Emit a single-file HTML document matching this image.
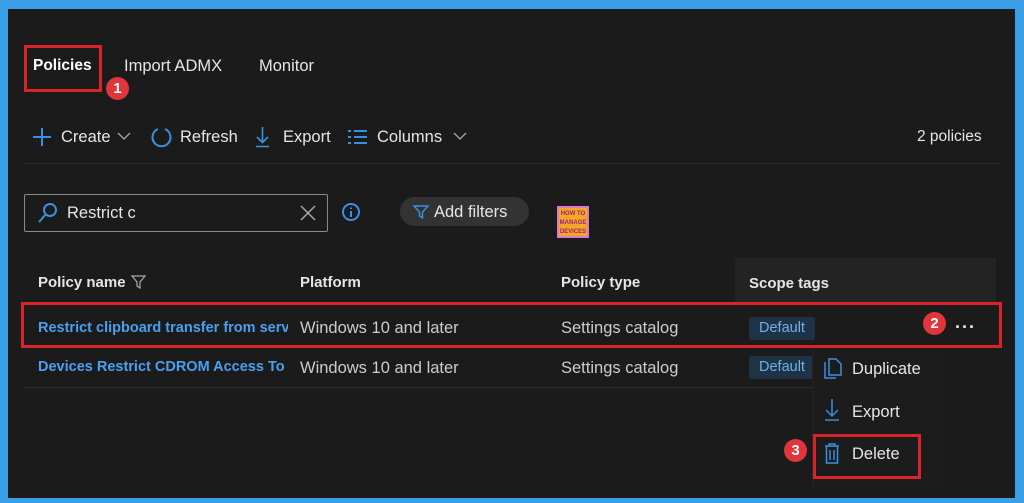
<!DOCTYPE html>
<html><head><style>
*{margin:0;padding:0;box-sizing:border-box}
body{width:1024px;height:503px;background:#3a9fe6;position:relative;overflow:hidden;font-family:"Liberation Sans",sans-serif;color:#e6e6e6;font-size:16.5px}
.main{position:absolute;left:8px;top:9px;width:1007px;height:489px;background:#1b1b1b}
.a{position:absolute;white-space:nowrap}
.b{font-weight:bold}
.red{position:absolute;border:3px solid #d8232a}
.badge{position:absolute;width:23px;height:23px;border-radius:50%;background:#e0353a;color:#fff;font-weight:bold;font-size:15px;text-align:center;line-height:23px}
.link{color:#4aa0f0;font-weight:bold}
.def{position:absolute;background:#1f3346;color:#6fb0ea;font-size:14.5px;border-radius:3px;width:66px;height:23px;line-height:23px;text-align:center}
svg{position:absolute}
</style></head><body>
<div class="main"></div>
<div class="a b" style="left:33px;top:57px;color:#fff;font-size:15.5px">Policies</div>
<div class="a" style="left:124px;top:57px">Import ADMX</div>
<div class="a" style="left:259px;top:57px">Monitor</div>
<div class="red" style="left:24px;top:45px;width:78px;height:47px"></div>
<div class="badge" style="left:106px;top:77px">1</div>

<svg style="left:32px;top:127px" width="20" height="20"><path d="M10 1v18M1 10h18" stroke="#3b8fe0" stroke-width="2"/></svg>
<div class="a" style="left:61px;top:128px">Create</div>
<svg style="left:117px;top:132px" width="14" height="9"><path d="M1 1l6 6 6-6" stroke="#aaa" fill="none" stroke-width="1.3"/></svg>
<svg style="left:150px;top:126px" width="22" height="22"><path d="M8 3A9 9 0 1 0 15 3" stroke="#3b8fe0" fill="none" stroke-width="2"/></svg>
<div class="a" style="left:180px;top:128px">Refresh</div>
<svg style="left:255px;top:126px" width="15" height="22"><path d="M7.5 1v15M2 11l5.5 5.5L13 11M1 20.5h13" stroke="#3b8fe0" fill="none" stroke-width="1.6"/></svg>
<div class="a" style="left:283px;top:128px">Export</div>
<svg style="left:347px;top:129px" width="21" height="16"><path d="M1 2h3M1 8h3M1 14h3M7 2h13M7 8h13M7 14h13" stroke="#3b8fe0" stroke-width="2"/></svg>
<div class="a" style="left:377px;top:128px">Columns</div>
<svg style="left:453px;top:132px" width="14" height="9"><path d="M1 1l6 6 6-6" stroke="#aaa" fill="none" stroke-width="1.3"/></svg>
<div class="a" style="left:917px;top:128px;font-size:15.5px">2 policies</div>
<div class="a" style="left:24px;top:163px;width:976px;height:1px;background:#2e2e2e"></div>

<div class="a" style="left:24px;top:194px;width:304px;height:38px;border:1px solid #8a8a8a;border-radius:2px"></div>
<svg style="left:37px;top:202px" width="22" height="22"><circle cx="13" cy="8" r="6" stroke="#3b8fe0" fill="none" stroke-width="2"/><path d="M9 12L2 20" stroke="#3b8fe0" stroke-width="2"/></svg>
<div class="a" style="left:67px;top:204px">Restrict c</div>
<svg style="left:300px;top:205px" width="16" height="16"><path d="M1 1l14 14M15 1L1 15" stroke="#aaa" stroke-width="1.5"/></svg>
<svg style="left:341px;top:202px" width="20" height="20"><circle cx="10" cy="10" r="8" stroke="#3b8fe0" fill="none" stroke-width="2"/><path d="M10 9v6M10 5.5v1.5" stroke="#3b8fe0" stroke-width="2"/></svg>
<div class="a" style="left:400px;top:197px;width:129px;height:29px;border-radius:15px;background:#333"></div>
<svg style="left:413px;top:205px" width="16" height="14"><path d="M1 1h14l-5.5 6v6l-3-2V7z" stroke="#3b8fe0" fill="none" stroke-width="1.5"/></svg>
<div class="a" style="left:434px;top:203px">Add filters</div>
<div class="a" style="left:557px;top:206px;width:32px;height:32px;background:#f5a623;border:2px solid #d77ad0;font-size:6px;color:#9a1f85;font-weight:bold;text-align:center;line-height:9px;padding-top:2px">HOW TO<br>MANAGE<br>DEVICES</div>

<div class="a" style="left:735px;top:258px;width:261px;height:46px;background:#232323"></div>
<div class="a b" style="left:38px;top:274px;font-size:15px">Policy name</div>
<svg style="left:131px;top:275px" width="15" height="14"><path d="M1 1h13l-5 6v6l-3-2V7z" stroke="#aaa" fill="none" stroke-width="1.2"/></svg>
<div class="a b" style="left:300px;top:274px;font-size:15px">Platform</div>
<div class="a b" style="left:561px;top:274px;font-size:15px">Policy type</div>
<div class="a b" style="left:749px;top:275px;font-size:15px">Scope tags</div>

<div class="a link" style="left:38px;top:320px;width:250px;overflow:hidden;font-size:14.5px">Restrict clipboard transfer from server</div>
<div class="a" style="left:300px;top:319px;color:#ccc">Windows 10 and later</div>
<div class="a" style="left:561px;top:319px;color:#ccc">Settings catalog</div>
<div class="def" style="left:749px;top:317px">Default</div>
<div class="a b" style="left:955px;top:312px;font-size:18px;letter-spacing:2px">...</div>
<div class="red" style="left:21px;top:302px;width:981px;height:46px"></div>
<div class="badge" style="left:923px;top:312px">2</div>

<div class="a link" style="left:38px;top:359px;width:247px;overflow:hidden;font-size:14.5px">Devices Restrict CDROM Access To Users</div>
<div class="a" style="left:300px;top:359px;color:#ccc">Windows 10 and later</div>
<div class="a" style="left:561px;top:359px;color:#ccc">Settings catalog</div>
<div class="def" style="left:749px;top:356px">Default</div>
<div class="a" style="left:24px;top:387px;width:790px;height:1px;background:#2c2c2c"></div>

<div class="a" style="left:812px;top:350px;width:130px;height:140px;background:#1c1c1c;border-left:1px solid #262626"></div>
<svg style="left:823px;top:358px" width="20" height="22"><path d="M2 4v16h11M6 1h7l5 5v11H6z" stroke="#3b8fe0" fill="none" stroke-width="1.5"/></svg>
<div class="a" style="left:852px;top:360px">Duplicate</div>
<svg style="left:824px;top:398px" width="16" height="24"><path d="M8 1v17M2 12l6 6 6-6M1 22h14" stroke="#3b8fe0" fill="none" stroke-width="1.5"/></svg>
<div class="a" style="left:852px;top:403px">Export</div>
<svg style="left:824px;top:443px" width="16" height="22"><path d="M1 3h14M5 3V1h6v2M2.5 3v17h11V3M6 7v10M10 7v10" stroke="#3b8fe0" fill="none" stroke-width="1.5"/></svg>
<div class="a" style="left:852px;top:445px">Delete</div>
<div class="red" style="left:813px;top:434px;width:108px;height:45px"></div>
<div class="badge" style="left:784px;top:439px">3</div>
</body></html>
